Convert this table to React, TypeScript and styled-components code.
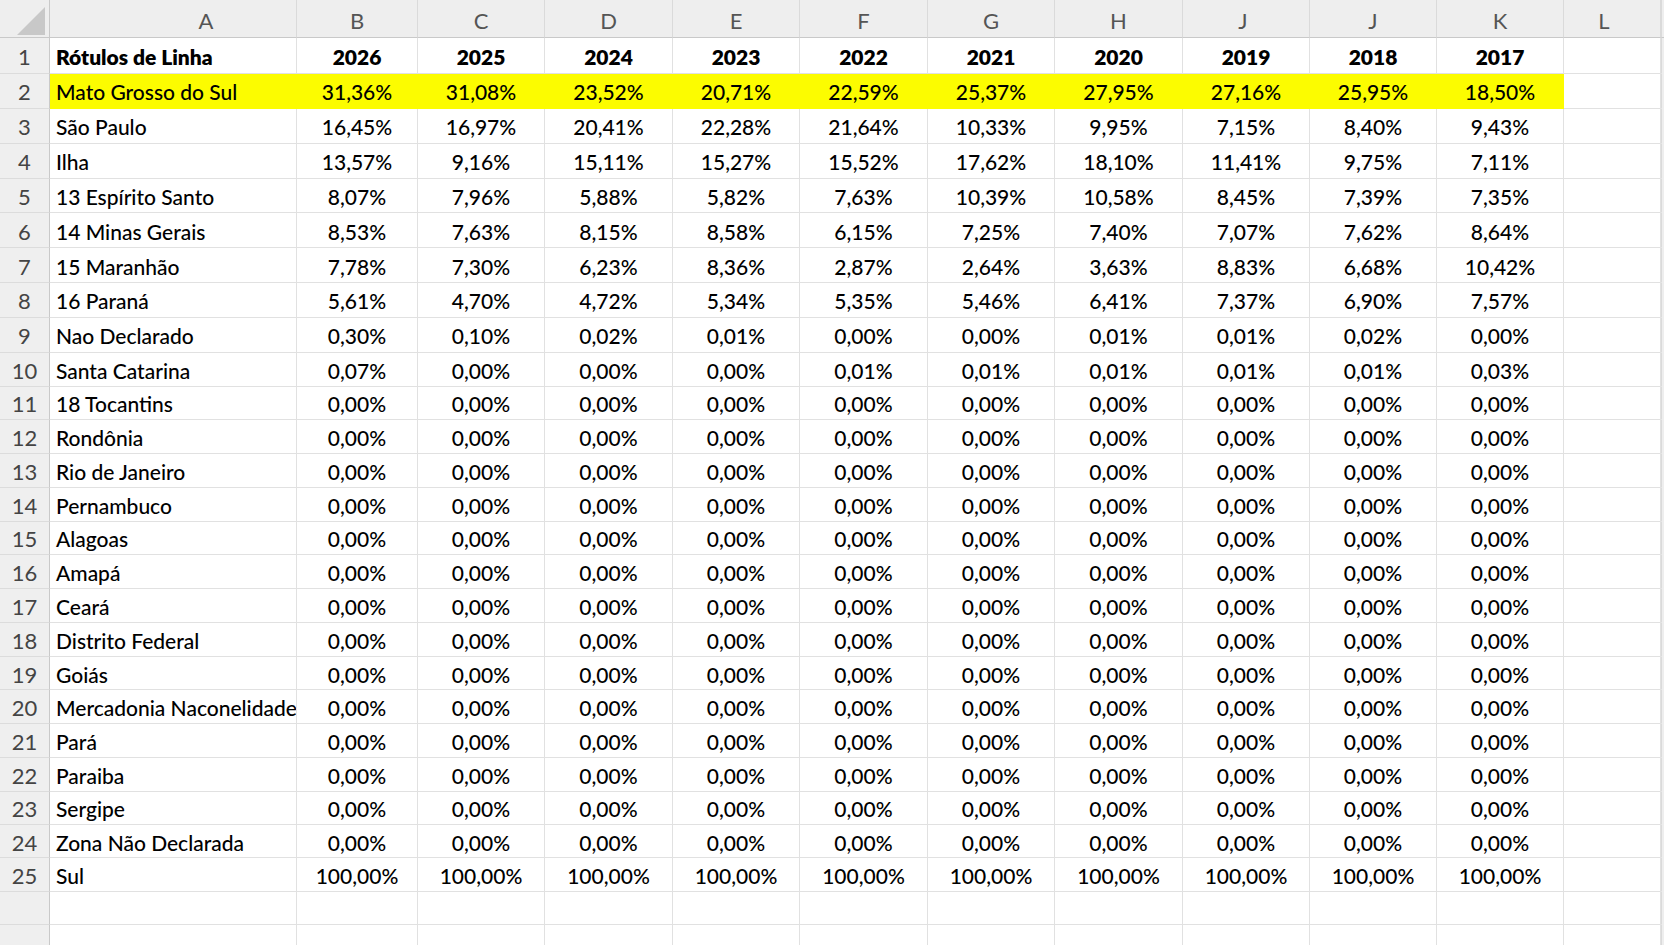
import React from "react";
import styled, { createGlobalStyle } from "styled-components";

const GlobalStyle = createGlobalStyle`
  html, body {
    margin: 0;
    padding: 0;
    background: #ffffff;
    overflow: hidden;
  }
  #root {
    width: 1664px;
    height: 945px;
    overflow: hidden;
  }
`;

const COLS = "50px 247px 121px 127px 128px 127px 128px 127px 128px 127px 127px 127px 97px 1fr";
const FONT = `"Lato", "Liberation Sans", sans-serif`;
const GRID = "#e1e1e1";
const HEAD_LINE = "#c9c9c9";

const Sheet = styled.div`
  display: flex;
  flex-direction: column;
  width: 1664px;
  height: 945px;
  overflow: hidden;
  font-family: ${FONT};
  background: #ffffff;
`;

const Row = styled.div<{ $h: number }>`
  display: grid;
  grid-template-columns: ${COLS};
  height: ${(p) => p.$h}px;
  flex: 0 0 auto;
`;

const Corner = styled.div`
  background: #eeeeee;
  border-right: 1px solid ${HEAD_LINE};
  border-bottom: 1px solid ${HEAD_LINE};
  box-sizing: border-box;
  display: flex;
  align-items: flex-end;
  justify-content: flex-end;
  padding: 0 4px 2px 0;
`;

const ColHead = styled.div<{ $shift?: number }>`
  background: #eeeeee;
  border-right: 1px solid #dadada;
  border-bottom: 1px solid ${HEAD_LINE};
  box-sizing: border-box;
  display: flex;
  align-items: center;
  justify-content: center;
  color: #555555;
  font-size: 22px;
  padding-top: 3px;
  padding-left: ${(p) => (p.$shift && p.$shift > 0 ? p.$shift * 2 : 0)}px;
  padding-right: ${(p) => (p.$shift && p.$shift < 0 ? -p.$shift * 2 : 0)}px;
`;

const Filler = styled.div<{ $head?: boolean }>`
  background: #eeeeee;
  border-left: 1px solid #dadada;
  border-bottom: 1px solid ${(p) => (p.$head ? HEAD_LINE : "#eeeeee")};
  box-sizing: border-box;
`;

const RowHead = styled.div`
  background: #efefef;
  border-right: 1px solid ${HEAD_LINE};
  border-bottom: 1px solid #dcdcdc;
  box-sizing: border-box;
  display: flex;
  align-items: center;
  justify-content: center;
  color: #444444;
  font-size: 22px;
  padding-top: 2px;
`;

const Cell = styled.div<{ $left?: boolean; $bold?: boolean; $yellow?: boolean }>`
  background: ${(p) => (p.$yellow ? "#fcfc00" : "#ffffff")};
  border-right: 1px solid ${(p) => (p.$yellow ? "#fcfc00" : GRID)};
  border-bottom: 1px solid ${(p) => (p.$yellow ? "#fcfc00" : GRID)};
  box-sizing: border-box;
  display: flex;
  align-items: center;
  justify-content: ${(p) => (p.$left ? "flex-start" : "center")};
  padding-top: 2px;
  padding-left: ${(p) => (p.$left ? "6px" : "0")};
  font-size: 21px;
  font-weight: ${(p) => (p.$bold ? 800 : 500)};
  color: #000000;
  white-space: nowrap;
  overflow: hidden;
`;

const CornerTriangle = () => (
  <svg width="28" height="28" viewBox="0 0 28 28">
    <polygon points="28,0 28,28 0,28" fill="#c8c8c8" />
  </svg>
);

const LETTERS: [string, number][] = [
  ["A", 33], ["B", 0], ["C", 0], ["D", 0], ["E", 0], ["F", 0], ["G", 0],
  ["H", 0], ["J", -3], ["J", 0], ["K", 0], ["L", -8],
];
const YEARS = ["2026", "2025", "2024", "2023", "2022", "2021", "2020", "2019", "2018", "2017"];

const Z = Array(10).fill("0,00%");

const DATA: [string, string[]][] = [
  ["Mato Grosso do Sul", ["31,36%", "31,08%", "23,52%", "20,71%", "22,59%", "25,37%", "27,95%", "27,16%", "25,95%", "18,50%"]],
  ["São Paulo", ["16,45%", "16,97%", "20,41%", "22,28%", "21,64%", "10,33%", "9,95%", "7,15%", "8,40%", "9,43%"]],
  ["Ilha", ["13,57%", "9,16%", "15,11%", "15,27%", "15,52%", "17,62%", "18,10%", "11,41%", "9,75%", "7,11%"]],
  ["13 Espírito Santo", ["8,07%", "7,96%", "5,88%", "5,82%", "7,63%", "10,39%", "10,58%", "8,45%", "7,39%", "7,35%"]],
  ["14 Minas Gerais", ["8,53%", "7,63%", "8,15%", "8,58%", "6,15%", "7,25%", "7,40%", "7,07%", "7,62%", "8,64%"]],
  ["15 Maranhão", ["7,78%", "7,30%", "6,23%", "8,36%", "2,87%", "2,64%", "3,63%", "8,83%", "6,68%", "10,42%"]],
  ["16 Paraná", ["5,61%", "4,70%", "4,72%", "5,34%", "5,35%", "5,46%", "6,41%", "7,37%", "6,90%", "7,57%"]],
  ["Nao Declarado", ["0,30%", "0,10%", "0,02%", "0,01%", "0,00%", "0,00%", "0,01%", "0,01%", "0,02%", "0,00%"]],
  ["Santa Catarina", ["0,07%", "0,00%", "0,00%", "0,00%", "0,01%", "0,01%", "0,01%", "0,01%", "0,01%", "0,03%"]],
  ["18 Tocantins", Z],
  ["Rondônia", Z],
  ["Rio de Janeiro", Z],
  ["Pernambuco", Z],
  ["Alagoas", Z],
  ["Amapá", Z],
  ["Ceará", Z],
  ["Distrito Federal", Z],
  ["Goiás", Z],
  ["Mercadonia Naconelidade", Z],
  ["Pará", Z],
  ["Paraiba", Z],
  ["Sergipe", Z],
  ["Zona Não Declarada", Z],
  ["Sul", Array(10).fill("100,00%")],
];

const rowHeight = (n: number): number => {
  if (n === 1) return 36;
  if (n <= 9) return 34.85;
  if (n <= 22) return 33.78;
  return 33.3;
};

export default function App() {
  return (
    <>
      <GlobalStyle />
      <Sheet>
        <Row $h={38}>
          <Corner>
            <CornerTriangle />
          </Corner>
          {LETTERS.map(([l, s], i) => (
            <ColHead key={i} $shift={s}>{l}</ColHead>
          ))}
          <Filler $head />
        </Row>
        <Row $h={rowHeight(1)}>
          <RowHead>1</RowHead>
          <Cell $left $bold>Rótulos de Linha</Cell>
          {YEARS.map((y) => (
            <Cell key={y} $bold>{y}</Cell>
          ))}
          <Cell />
          <Filler />
        </Row>
        {DATA.map(([label, vals], idx) => {
          const n = idx + 2;
          const yellow = n === 2;
          return (
            <Row key={n} $h={rowHeight(n)}>
              <RowHead>{n}</RowHead>
              <Cell $left $yellow={yellow}>{label}</Cell>
              {vals.map((v, i) => (
                <Cell key={i} $yellow={yellow}>{v}</Cell>
              ))}
              <Cell />
              <Filler />
            </Row>
          );
        })}
        {[26, 27].map((n) => (
          <Row key={n} $h={33.3}>
            <RowHead />
            {Array.from({ length: 12 }).map((_, i) => (
              <Cell key={i} />
            ))}
            <Filler />
          </Row>
        ))}
      </Sheet>
    </>
  );
}
